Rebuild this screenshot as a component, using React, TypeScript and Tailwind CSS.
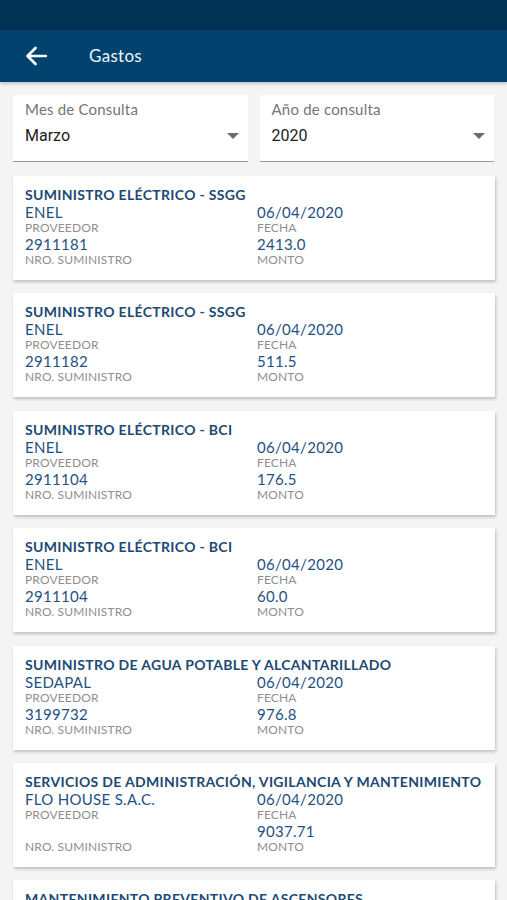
import React from "react";

type Item = { title: string; prov: string; nro: string; fecha: string; monto: string };

const items: Item[] = [
  { title: "SUMINISTRO ELÉCTRICO - SSGG", prov: "ENEL", nro: "2911181", fecha: "06/04/2020", monto: "2413.0" },
  { title: "SUMINISTRO ELÉCTRICO - SSGG", prov: "ENEL", nro: "2911182", fecha: "06/04/2020", monto: "511.5" },
  { title: "SUMINISTRO ELÉCTRICO - BCI", prov: "ENEL", nro: "2911104", fecha: "06/04/2020", monto: "176.5" },
  { title: "SUMINISTRO ELÉCTRICO - BCI", prov: "ENEL", nro: "2911104", fecha: "06/04/2020", monto: "60.0" },
  { title: "SUMINISTRO DE AGUA POTABLE Y ALCANTARILLADO", prov: "SEDAPAL", nro: "3199732", fecha: "06/04/2020", monto: "976.8" },
  { title: "SERVICIOS DE ADMINISTRACIÓN, VIGILANCIA Y MANTENIMIENTO", prov: "FLO HOUSE S.A.C.", nro: "", fecha: "06/04/2020", monto: "9037.71" },
  { title: "MANTENIMIENTO PREVENTIVO DE ASCENSORES", prov: "", nro: "", fecha: "", monto: "" },
];

function Select({ label, value }: { label: string; value: string }) {
  return (
    <div className="flex-1 bg-white border-b border-[#9a9a9a] pl-[12px] pr-[8px] pt-[5px] h-[67px]">
      <div className="text-[15px] leading-[18px] text-[#757575] font-['Lato',sans-serif] tracking-[0.2px]">{label}</div>
      <div className="flex items-center justify-between mt-[7px]">
        <span className="text-[16px] leading-[22px] text-[#212121] font-['Roboto',sans-serif]">{value}</span>
        <svg width="12" height="6" viewBox="0 0 12 6" className="mr-[1px]">
          <path d="M0 0 L12 0 L6 6 Z" fill="#6b6b6b" />
        </svg>
      </div>
    </div>
  );
}

function Card({ it }: { it: Item }) {
  const val = "text-[15px] leading-[16px] text-[#1f5183] tracking-[0.3px] h-[16px]";
  const lab = "text-[12px] leading-[15px] text-[#8f8f8f] tracking-[0.15px]";
  return (
    <div className="bg-white shadow-[1px_2px_3px_rgba(0,0,0,0.22)] h-[104px] pl-[12px] pr-[8px] pt-[10px] font-['Lato',sans-serif] overflow-hidden">
      <div className="text-[14px] leading-[18px] font-bold text-[#1c4a74] whitespace-nowrap tracking-[0.32px]">{it.title}</div>
      <div className="grid grid-cols-[232px_1fr]">
        <div>
          <div className={val}>{it.prov}</div>
          <div className={lab}>PROVEEDOR</div>
          <div className={val + " mt-[1px]"}>{it.nro}</div>
          <div className={lab}>NRO. SUMINISTRO</div>
        </div>
        <div>
          <div className={val}>{it.fecha}</div>
          <div className={lab}>FECHA</div>
          <div className={val + " mt-[1px]"}>{it.monto}</div>
          <div className={lab}>MONTO</div>
        </div>
      </div>
    </div>
  );
}

export default function App() {
  return (
    <div className="w-[507px] h-[900px] overflow-hidden bg-[#f4f4f4]">
      <div className="h-[30px] bg-[#003254]" />
      <div className="h-[52px] bg-[#00426e] flex items-center shadow-[0_2px_3px_rgba(0,0,0,0.2)] relative z-10">
        <svg width="22" height="20" viewBox="0 0 22 20" className="ml-[25px]">
          <path d="M21 10 H3 M10.5 2 L2.5 10 L10.5 18" stroke="white" strokeWidth="2.6" fill="none" strokeLinecap="round" strokeLinejoin="round" />
        </svg>
        <span className="ml-[42px] text-[17px] text-[#f0f3f6] font-['Lato',sans-serif] tracking-[0.3px]">Gastos</span>
      </div>
      <div className="flex gap-[12px] px-[13px] pt-[13px] pr-[13px]">
        <Select label="Mes de Consulta" value="Marzo" />
        <Select label="Año de consulta" value="2020" />
      </div>
      <div className="flex flex-col gap-[13.4px] pl-[13px] pr-[12px] pt-[14px]">
        {items.map((it, i) => (
          <Card key={i} it={it} />
        ))}
      </div>
    </div>
  );
}
